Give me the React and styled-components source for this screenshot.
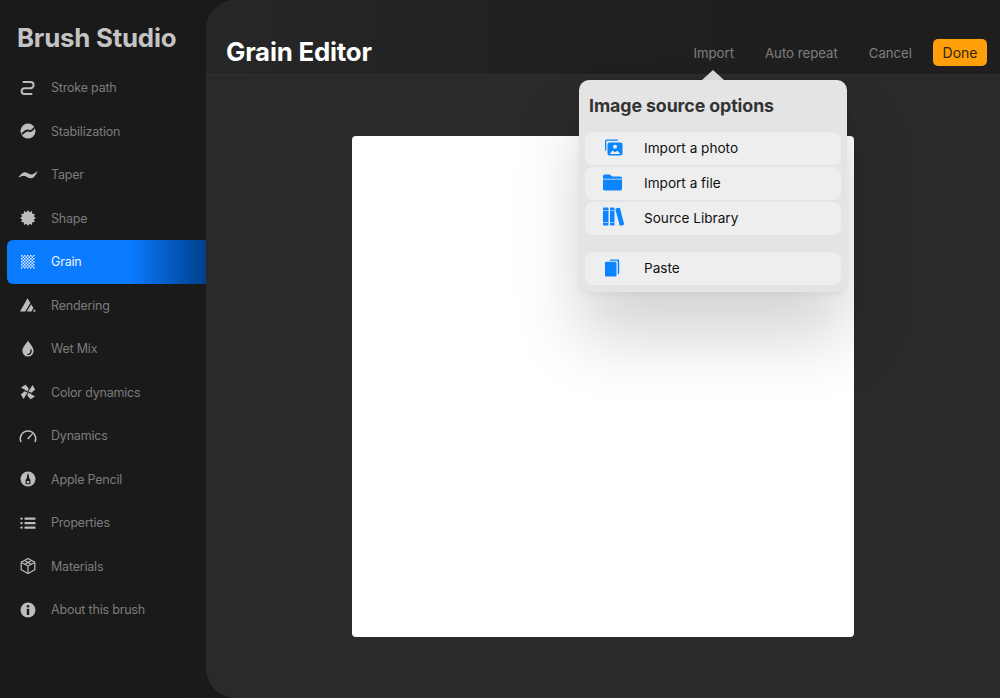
import React from "react";
import styled, { createGlobalStyle } from "styled-components";

const GlobalStyle = createGlobalStyle`
  html, body {
    margin: 0;
    padding: 0;
    background: #181818;
    font-family: Inter, "Liberation Sans", sans-serif;
  }
`;

const Screen = styled.div`
  width: 1000px;
  height: 698px;
  display: flex;
  overflow: hidden;
  background: linear-gradient(90deg, #1a1a1a 0%, #191919 80%, #141414 100%);
`;

const Sidebar = styled.nav`
  width: 206px;
  flex-shrink: 0;
  padding-left: 7px;
  box-sizing: border-box;
`;

const AppTitle = styled.h1`
  margin: 0 0 0 10px;
  height: 66px;
  padding-top: 22px;
  box-sizing: border-box;
  font-size: 25.8px;
  line-height: 32px;
  font-weight: 700;
  letter-spacing: -0.2px;
  color: #c4c4c4;
`;

const NavRow = styled.div`
  height: 43.5px;
  display: flex;
  align-items: center;
  gap: 13px;
  padding-left: 11px;
  border-radius: 6px 0 0 6px;
  font-size: 12.5px;
  letter-spacing: -0.2px;
  color: ${({ $active }) => ($active ? "#eef5ff" : "#7c7c7c")};
  background: ${({ $active }) =>
    $active ? "linear-gradient(90deg, #0a7aff 0%, #0a7aff 62%, #003f8c 100%)" : "none"};
`;

const NavIcon = styled.svg`
  width: 20px;
  height: 20px;
  flex-shrink: 0;
  color: ${({ $active }) => ($active ? "#dcebff" : "#bdbdbd")};
`;

const Main = styled.main`
  position: relative;
  flex: 1;
  display: flex;
  flex-direction: column;
  background: #2a2a2a;
  border-radius: 30px 0 0 30px;
`;

const Header = styled.header`
  height: 75px;
  flex-shrink: 0;
  display: flex;
  align-items: center;
  padding: 31px 13px 0 20px;
  box-sizing: border-box;
  background: linear-gradient(90deg, #272727 0%, #202020 45%, #1e1e1e 100%);
  border-bottom: 1px solid #2f2f2f;
  border-top-left-radius: 30px;
`;

const Title = styled.h2`
  margin: 0;
  flex: 1;
  font-size: 25.8px;
  font-weight: 700;
  letter-spacing: -0.2px;
  color: #fff;
  position: relative;
  top: -1px;
`;

const Action = styled.span`
  font-size: 13.2px;
  color: #7f7f7f;
  margin-right: ${({ $gap }) => $gap}px;
`;

const DoneButton = styled.button`
  width: 54px;
  height: 27px;
  padding: 0;
  border: 0;
  border-radius: 5px;
  background: #ff9f0a;
  color: #33250a;
  font: 400 14px Inter, "Liberation Sans", sans-serif;
`;

const Workspace = styled.section`
  flex: 1;
  display: flex;
  align-items: center;
  justify-content: center;
`;

const Canvas = styled.div`
  width: 502px;
  height: 501px;
  background: #fff;
  border-radius: 4px;
`;

const Popover = styled.div`
  position: absolute;
  top: 80px;
  left: 373px;
  width: 268px;
  height: 212px;
  box-sizing: border-box;
  padding: 0 6px;
  background: #e4e4e4;
  border-radius: 10px;
  box-shadow: 0 46px 66px 0 rgba(0, 0, 0, 0.17), 0 2px 6px rgba(0, 0, 0, 0.05);
`;

const Arrow = styled.div`
  position: absolute;
  top: -10px;
  left: 123px;
  width: 0;
  height: 0;
  border-left: 11px solid transparent;
  border-right: 11px solid transparent;
  border-bottom: 10px solid #d6d6d6;
`;

const PopoverTitle = styled.h3`
  margin: 0 0 0 4px;
  height: 52px;
  padding-top: 15px;
  box-sizing: border-box;
  font-size: 17.8px;
  line-height: 22px;
  font-weight: 700;
  letter-spacing: -0.1px;
  color: #333;
`;

const OptionGroup = styled.div`
  display: flex;
  flex-direction: column;
  gap: 2px;
  margin-bottom: 17px;
`;

const Option = styled.div`
  height: 33px;
  display: flex;
  align-items: center;
  gap: 19px;
  padding: 0 0 1px 16px;
  box-sizing: border-box;
  border-radius: 8px;
  background: #eeeeee;
  font-size: 13.6px;
  color: #111;
`;

const OptionIcon = styled.svg`
  width: 24px;
  height: 24px;
  flex-shrink: 0;
  color: #0a84ff;
`;

const grainCells = [];
for (let y = 0; y < 9; y++) {
  for (let x = 0; x < 9; x++) {
    if ((x + y) % 2 === 0) {
      grainCells.push(<rect key={`${x}-${y}`} x={3 + x * 1.5} y={3 + y * 1.5} width="1.5" height="1.5" />);
    }
  }
}

// 12 point seal for the Shape row
const sealPoints = [];
for (let i = 0; i < 24; i++) {
  const r = i % 2 === 0 ? 8 : 6;
  const a = (i * Math.PI) / 12;
  sealPoints.push(`${(10 + r * Math.sin(a)).toFixed(2)},${(10 - r * Math.cos(a)).toFixed(2)}`);
}

const pinwheelBlade = "M9.600 9.600L3 5.500 7.500 2.800 10.800 6.500z";

const navItems = [
  {
    label: "Stroke path",
    icon: (
      <path
        d="M5.500 4h7a3 3 0 0 1 0 6.200H6.500a2.900 2.900 0 0 0 0 5.800h7"
        fill="none"
        stroke="currentColor"
        strokeWidth="2"
        strokeLinecap="round"
      />
    ),
  },
  {
    label: "Stabilization",
    icon: (
      <>
        <circle cx="10" cy="10" r="7.500" fill="currentColor" />
        <path
          d="M3.500 13c2-.6 3.300-3.300 6-3.500 1.500-.1 2.200.7 3.200.5 1.200-.2 2.200-1.500 3.800-3.500"
          fill="none"
          stroke="#191919"
          strokeWidth="1.800"
        />
      </>
    ),
  },
  {
    label: "Taper",
    icon: (
      <path
        d="M.5 12.500C3 8.500 5.500 6.800 8 7.500c2.500.8 4.500 2.600 6.500 1.800 1.500-.6 3.200-1.800 5-3.300-1.500 4-3.500 7-6.300 7.300-2.700.3-4.500-1.800-6.500-2.300-2-.4-3.800.3-6.200 1.500z"
        fill="currentColor"
      />
    ),
  },
  { label: "Shape", icon: <polygon points={sealPoints.join(" ")} fill="currentColor" /> },
  { label: "Grain", active: true, icon: <g fill="currentColor">{grainCells}</g> },
  {
    label: "Rendering",
    icon: (
      <path
        d="M2 16.500L9.500 3.200 12.400 8 7.300 16.500zM8.800 16.500L13.200 9.200 15.400 13 13.400 16.500zM14.900 16.500L16.200 14.200 18 16.500z"
        fill="currentColor"
      />
    ),
  },
  {
    label: "Wet Mix",
    icon: (
      <>
        <path d="M10 1.800c2.700 4 5.600 6.500 5.600 10.200a5.600 5.600 0 0 1-11.200 0C4.400 8.300 7.300 5.800 10 1.800z" fill="currentColor" />
        <path d="M13 11c.4 2.400-.8 4.200-3 4.400" fill="none" stroke="#191919" strokeWidth="1.400" strokeLinecap="round" />
      </>
    ),
  },
  {
    label: "Color dynamics",
    icon: (
      <g fill="currentColor">
        <path d={pinwheelBlade} />
        <path d={pinwheelBlade} transform="rotate(90 10 10)" />
        <path d={pinwheelBlade} transform="rotate(180 10 10)" />
        <path d={pinwheelBlade} transform="rotate(270 10 10)" />
      </g>
    ),
  },
  {
    label: "Dynamics",
    icon: (
      <>
        <path d="M2.800 15.500a7.700 7.700 0 1 1 14.400 0" fill="none" stroke="currentColor" strokeWidth="1.500" strokeLinecap="round" />
        <path d="M9.200 12.200l5-5 .8.800-4.600 5.400z" fill="currentColor" />
      </>
    ),
  },
  {
    label: "Apple Pencil",
    icon: (
      <>
        <circle cx="10" cy="10" r="7.500" fill="currentColor" />
        <path d="M10 3.800l1 3.400v1.500l1.400 2.300v4.300H7.600V11l1.400-2.300V7.200z" fill="#191919" />
        <path d="M8.800 12h2.400v2.300H8.800z" fill="#bdbdbd" />
      </>
    ),
  },
  {
    label: "Properties",
    icon: (
      <g fill="currentColor">
        <rect x="6.500" y="4.500" width="11" height="2.200" rx=".5" />
        <rect x="6.500" y="9" width="11" height="2.200" rx=".5" />
        <rect x="6.500" y="13.500" width="11" height="2.200" rx=".5" />
        <circle cx="3.500" cy="5.600" r="1.200" />
        <circle cx="3.500" cy="10.100" r="1.200" />
        <circle cx="3.500" cy="14.600" r="1.200" />
      </g>
    ),
  },
  {
    label: "Materials",
    icon: (
      <g fill="none" stroke="currentColor" strokeWidth="1.200" strokeLinejoin="round">
        <path d="M10 2.500l6.800 3.800v7.400L10 17.500l-6.800-3.800V6.300z" />
        <path d="M3.500 6.500L10 10l6.500-3.500M10 10v7.200M6.500 4.500l6.800 3.800M13.500 4.500L6.700 8.300" />
      </g>
    ),
  },
  {
    label: "About this brush",
    icon: (
      <>
        <circle cx="10" cy="10" r="7.500" fill="currentColor" />
        <circle cx="10" cy="6.200" r="1.300" fill="#191919" />
        <rect x="8.800" y="8.700" width="2.400" height="6.200" rx=".5" fill="#191919" />
      </>
    ),
  },
];

const PhotoIcon = () => (
  <OptionIcon viewBox="0 0 24 24" fill="currentColor">
    <path d="M4 5.500a2 2 0 0 1 2-2h11v1.300H6a.7.7 0 0 0-.7.700V14.500H4z" />
    <path
      fillRule="evenodd"
      d="M8.500 6.500h11a2 2 0 0 1 2 2v9a2 2 0 0 1-2 2h-11a2 2 0 0 1-2-2v-9a2 2 0 0 1 2-2zM14 8.800a2 2 0 1 0 0 4 2 2 0 0 0 0-4zM8.800 18h10.400l-2-2.500c-.4-.5-1-.6-1.500-.2L14 16.200l-1.700-1.200c-.5-.3-1-.3-1.400.1z"
    />
  </OptionIcon>
);

const FolderIcon = () => (
  <OptionIcon viewBox="0 0 24 24" fill="currentColor">
    <path d="M2 5.300c0-1 .8-1.800 1.800-1.800h4.400c.8 0 1.300.3 1.800.9l1 1.100h8.200c1 0 1.800.8 1.800 1.800v.400H2z" />
    <path d="M2 8.500h19v9.200c0 1-.8 1.800-1.800 1.800H3.800c-1 0-1.800-.8-1.800-1.800z" />
  </OptionIcon>
);

const BooksIcon = () => (
  <OptionIcon viewBox="0 0 24 24" fill="currentColor">
    <rect x="2" y="1.500" width="5.500" height="18" rx="1" />
    <rect x="9" y="1.500" width="4.500" height="18" rx="1" />
    <path d="M15 2.600l2.800-.9c.5-.2 1 .1 1.200.6l4 15.500c.1.500-.1 1-.6 1.200l-2.500.8c-.5.200-1-.1-1.200-.6L14.500 3.700c-.1-.5 0-.9.500-1.100z" />
    <path d="M2 4.500h5.500M2 16.500h5.500M9 4.500h4.500M9 16.500h4.500" stroke="#eeeeee" strokeWidth=".6" />
  </OptionIcon>
);

const PasteIcon = () => (
  <OptionIcon viewBox="0 0 24 24" fill="currentColor">
    <path d="M8.500 4.800l1-1.300h7.700c.6 0 1 .4 1 1v12.500c0 .6-.4 1-1 1h-.4V6.300c0-.8-.7-1.500-1.500-1.500z" />
    <rect x="4" y="5.800" width="11.500" height="14.700" rx="1.200" />
  </OptionIcon>
);

const App = () => (
  <Screen>
    <GlobalStyle />
    <Sidebar>
      <AppTitle>Brush Studio</AppTitle>
      {navItems.map((item) => (
        <NavRow key={item.label} $active={item.active}>
          <NavIcon viewBox="0 0 20 20" $active={item.active}>
            {item.icon}
          </NavIcon>
          {item.label}
        </NavRow>
      ))}
    </Sidebar>
    <Main>
      <Header>
        <Title>Grain Editor</Title>
        <Action $gap={31}>Import</Action>
        <Action $gap={31}>Auto repeat</Action>
        <Action $gap={21}>Cancel</Action>
        <DoneButton>Done</DoneButton>
      </Header>
      <Workspace>
        <Canvas />
      </Workspace>
      <Popover>
        <Arrow />
        <PopoverTitle>Image source options</PopoverTitle>
        <OptionGroup>
          <Option>
            <PhotoIcon />
            Import a photo
          </Option>
          <Option>
            <FolderIcon />
            Import a file
          </Option>
          <Option>
            <BooksIcon />
            Source Library
          </Option>
        </OptionGroup>
        <Option>
          <PasteIcon />
          Paste
        </Option>
      </Popover>
    </Main>
  </Screen>
);

export default App;
